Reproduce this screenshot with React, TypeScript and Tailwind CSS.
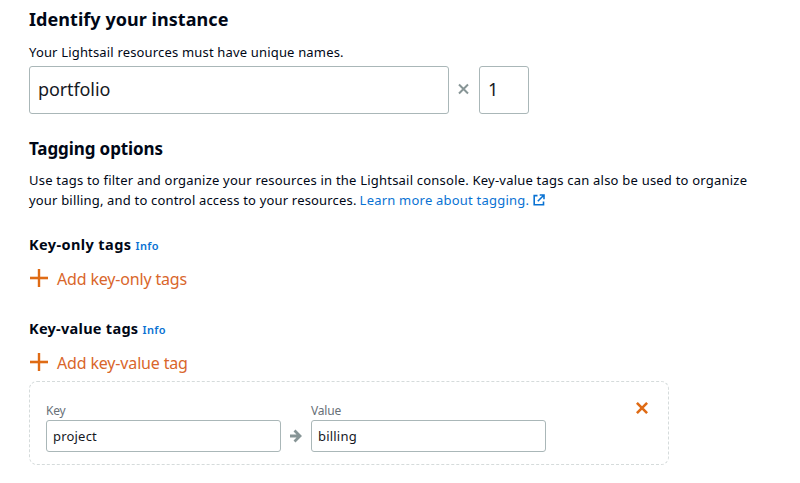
import React from "react";

function PlusIcon() {
  return (
    <svg width="18" height="18" viewBox="0 0 18 18" className="mb-0.5 shrink-0" fill="none" stroke="#df6b15">
      <path strokeWidth="2.4" d="M9 0v18" />
      <path strokeWidth="2.6" d="M0 9h18" />
    </svg>
  );
}

function TagHeading({ children, className }: { children: string; className: string }) {
  return (
    <div className="flex h-5 items-baseline gap-1 leading-5 whitespace-nowrap">
      <h3 className={`text-[14.5px] leading-5 font-bold ${className}`}>{children}</h3>
      <a className="text-[11px] font-semibold tracking-[0.4px] text-[#0972d3]">Info</a>
    </div>
  );
}

function AddButton({ children, className }: { children: string; className: string }) {
  return (
    <button className="mt-[13px] flex h-6 items-center gap-[9px] pl-px whitespace-nowrap text-[#d9662b]">
      <PlusIcon />
      <span className={`text-base leading-6 ${className}`}>{children}</span>
    </button>
  );
}

function Field({ label, value }: { label: string; value: string }) {
  return (
    <label className="flex w-[235px] flex-col gap-px">
      <span className="text-xs leading-4 tracking-[-0.2px] text-[#687078]">{label}</span>
      <input
        defaultValue={value}
        className="h-8 w-full rounded-[3px] border border-[#aab7b8] px-1.5 text-[13px] tracking-[0.2px] text-[#16191f] outline-none"
      />
    </label>
  );
}

export default function App() {
  return (
    <main className="h-[483px] w-[800px] overflow-hidden bg-white pt-[7px] pl-[29px] font-['Noto_Sans',sans-serif] text-[#000716]">
      <h2 className="text-lg leading-6 font-bold tracking-[0.05px] whitespace-nowrap">Identify your instance</h2>
      <p className="mt-[11px] text-[13px] leading-5 tracking-[0.17px] whitespace-nowrap">Your Lightsail resources must have unique names.</p>
      <div className="mt-1 flex h-12 items-center">
        <input
          defaultValue="portfolio"
          className="h-12 w-[420px] rounded-[3px] border border-[#aab7b8] px-2 pb-0.5 text-lg tracking-[-0.1px] text-[#16191f] outline-none"
        />
        <svg width="30" height="12" viewBox="0 0 30 12" className="mb-0.5" fill="none" stroke="#879596" strokeWidth="2">
          <path d="M10 1.5l9 9M19 1.5l-9 9" />
        </svg>
        <input
          defaultValue="1"
          className="h-12 w-[50px] rounded-[3px] border border-[#aab7b8] px-2 pb-0.5 text-lg text-[#16191f] outline-none"
        />
      </div>

      <h2 className="mt-[23px] text-[17px] leading-6 font-bold tracking-[-0.1px] whitespace-nowrap">Tagging options</h2>
      <div className="mt-[9px] text-[13px] leading-5 tracking-[0.215px] whitespace-nowrap">
        <p>Use tags to filter and organize your resources in the Lightsail console. Key-value tags can also be used to organize</p>
        <p className="flex">
          <span className="tracking-[0.18px]">your billing, and to control access to your resources.</span>
          <a className="ml-[3px] flex text-[#0972d3]">
            <span>Learn more about tagging.</span>
            <svg width="12" height="12" viewBox="0 0 12 12" className="mt-1 ml-1" fill="none" stroke="currentColor" strokeWidth="1.6">
              <path d="M4.5 1.6H1.2v9.2h9.3V7.5M6.7 1h4.3v4.3M11 1L4.8 7.2" />
            </svg>
          </a>
        </p>
      </div>

      <div className="mt-6">
        <TagHeading className="tracking-[0.4px]">Key-only tags</TagHeading>
        <AddButton className="tracking-[-0.17px]">Add key-only tags</AddButton>
      </div>

      <div className="mt-[27px]">
        <TagHeading className="tracking-[0.28px]">Key-value tags</TagHeading>
        <AddButton className="tracking-[-0.16px]">Add key-value tag</AddButton>
      </div>

      <section className="mt-1.5 flex h-[84px] w-[640px] rounded-lg border border-dashed border-[#d5dbdb] pt-[21px] pl-4">
        <Field label="Key" value="project" />
        <svg width="30" height="14" viewBox="0 0 30 14" className="mt-[26px]" fill="none" stroke="#879596" strokeWidth="2.8">
          <path d="M9 7h10M13.5 1.6L19 7l-5.5 5.4" />
        </svg>
        <Field label="Value" value="billing" />
        <button className="-mt-px ml-[90px] h-3 w-3">
          <svg width="12" height="12" viewBox="0 0 12 12" fill="none" stroke="#df6b15" strokeWidth="2.6">
            <path d="M.9.9l10.2 10.2M11.1.9L.9 11.1" />
          </svg>
        </button>
      </section>
    </main>
  );
}
